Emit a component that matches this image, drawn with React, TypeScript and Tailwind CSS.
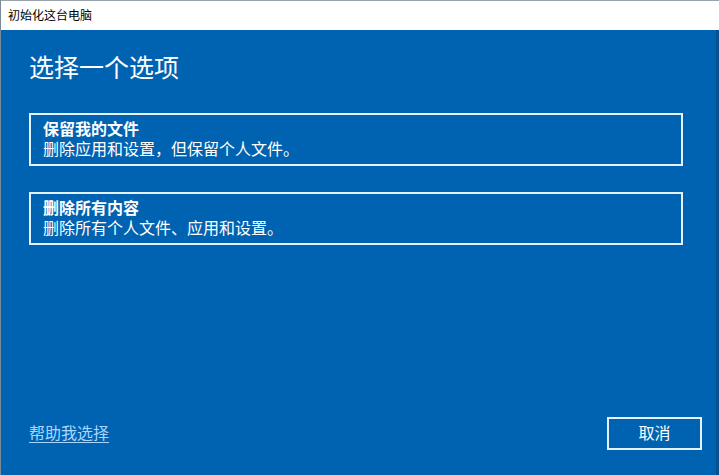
export default function App() {
  return (
    <div className="w-[719px] h-[475px] flex flex-col bg-[#0063b1] border-l border-[#7a8a99] font-['Liberation_Sans','Noto_Sans_CJK_SC',sans-serif] overflow-hidden">
      {/* Title bar */}
      <div className="h-[30px] shrink-0 bg-white border-t border-[#9aa3ab] flex items-center px-[7px] text-[12px] leading-none text-black">
        初始化这台电脑
      </div>

      {/* Body */}
      <div className="flex-1 flex flex-col bg-[#0063b1] border-r-[3px] border-[#0b4f8e] pl-[28px] pr-[33px] pb-[25px] text-white">
        <h1 className="mt-[23px] text-[25px] leading-[30px] font-normal">选择一个选项</h1>

        <div className="mt-[30px] flex flex-col gap-[26px]">
          <OptionCard title="保留我的文件" desc="删除应用和设置，但保留个人文件。" />
          <OptionCard title="删除所有内容" desc="删除所有个人文件、应用和设置。" />
        </div>

        <div className="mt-auto flex items-center justify-between">
          <a className="text-[16px] leading-[20px] text-[#a9d6ff] underline underline-offset-[3px] cursor-pointer">
            帮助我选择
          </a>
          <button className="w-[95px] h-[33px] border-2 border-[#e4f3ff] text-[16px] leading-none text-white flex items-center justify-center mr-[-19px]">
            取消
          </button>
        </div>
      </div>
    </div>
  );
}

function OptionCard({ title, desc }: { title: string; desc: string }) {
  return (
    <div className="border-2 border-[#e4f3ff] pl-[12px] pt-[5px] pb-[4px]">
      <div className="text-[16px] leading-[20px] font-bold">{title}</div>
      <div className="text-[16px] leading-[20px]">{desc}</div>
    </div>
  );
}
